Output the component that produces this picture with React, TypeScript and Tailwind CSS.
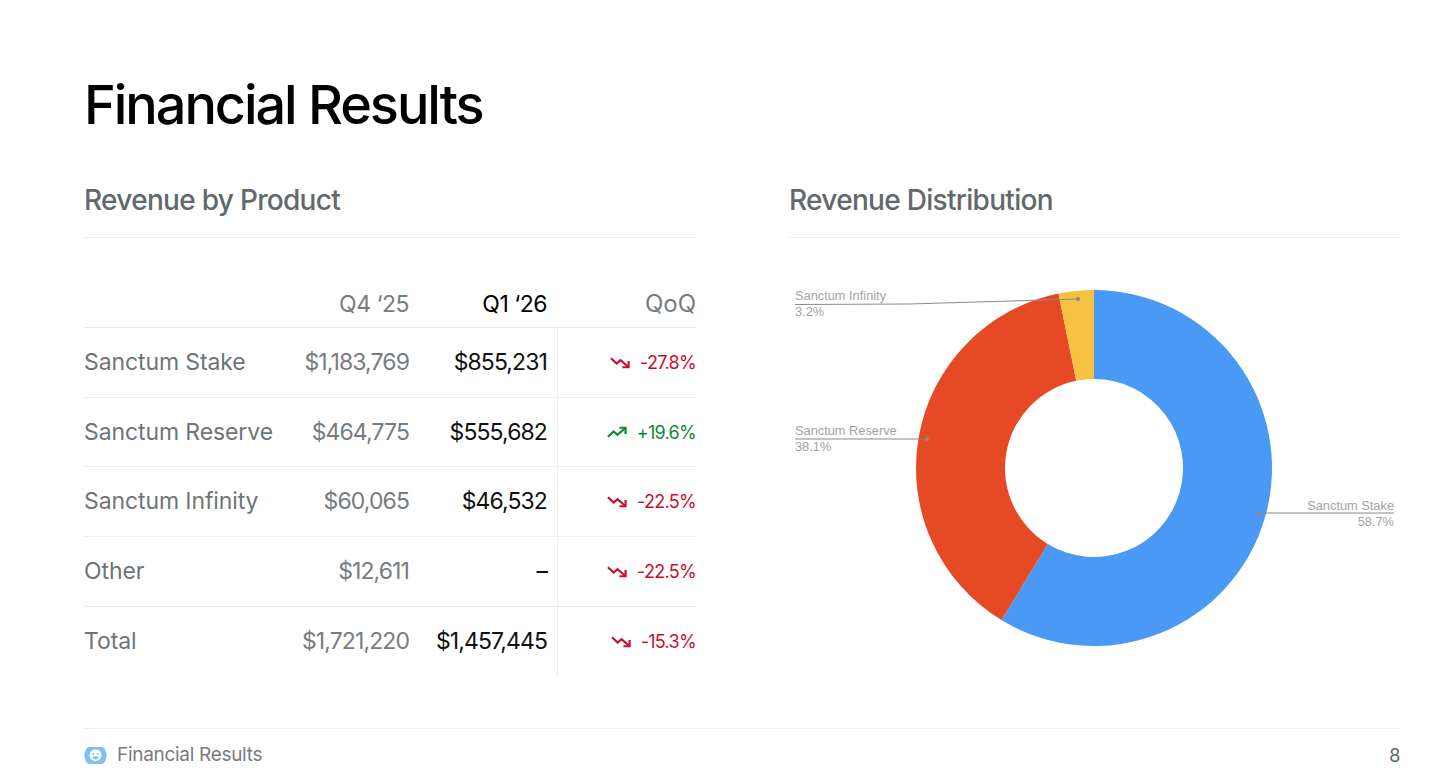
import React from 'react';

const font = { sans: 'font-["Inter",sans-serif]' };

const rows = [
  { name: 'Sanctum Stake', q4: '$1,183,769', q1: '$855,231', qoq: '-27.8%', up: false },
  { name: 'Sanctum Reserve', q4: '$464,775', q1: '$555,682', qoq: '+19.6%', up: true },
  { name: 'Sanctum Infinity', q4: '$60,065', q1: '$46,532', qoq: '-22.5%', up: false },
  { name: 'Other', q4: '$12,611', q1: '–', qoq: '-22.5%', up: false },
  { name: 'Total', q4: '$1,721,220', q1: '$1,457,445', qoq: '-15.3%', up: false },
];

const Trend = ({ up }: { up: boolean }) => (
  <svg width="20" height="13" viewBox="0 0 21 13" fill="none" stroke={up ? '#0f8a34' : '#c8102e'} strokeWidth="2.3">
    {up ? (
      <>
        <polyline points="1,11 7,5.500 11,9 19,2" />
        <polyline points="13,1.500 19.500,1.500 19.500,8" />
      </>
    ) : (
      <>
        <polyline points="1,2 7,7.500 11,4 19,11" />
        <polyline points="19.500,5 19.500,11.500 13,11.500" />
      </>
    )}
  </svg>
);

// center of the donut sits at 305,188 in the chart box
const polar = (pct: number, r: number) => {
  const a = (pct / 100) * 2 * Math.PI;
  return [305 + r * Math.sin(a), 188 - r * Math.cos(a)];
};

const slice = (from: number, to: number) => {
  const [x1, y1] = polar(from, 178);
  const [x2, y2] = polar(to, 178);
  const [x3, y3] = polar(to, 89);
  const [x4, y4] = polar(from, 89);
  const large = to - from > 50 ? 1 : 0;
  return `M${x1} ${y1} A178 178 0 ${large} 1 ${x2} ${y2} L${x3} ${y3} A89 89 0 ${large} 0 ${x4} ${y4} Z`;
};

const Donut = () => (
  <svg width="612" height="380" viewBox="0 0 612 380" className="mt-[42px]">
    <path d={slice(0, 58.7)} fill="#4a9af5" />
    <path d={slice(58.7, 96.8)} fill="#e64a25" />
    <path d={slice(96.8, 100)} fill="#f7c242" />
    <g fontFamily="Liberation Sans, sans-serif" fontSize="12.8" fill="#a3a3a3">
      <text x="6" y="20">Sanctum Infinity</text>
      <text x="6" y="36">3.2%</text>
      <text x="6" y="155">Sanctum Reserve</text>
      <text x="6" y="171">38.1%</text>
      <text x="605" y="230" textAnchor="end">Sanctum Stake</text>
      <text x="605" y="246" textAnchor="end">58.7%</text>
    </g>
    <g stroke="#8a8a8a" strokeWidth="1" fill="none">
      <polyline points="6,24.500 120,24 289,19" />
      <polyline points="6,159 138,159" />
      <polyline points="605,233 468,233" />
    </g>
    <g fill="#8a8a8a">
      <circle cx="289" cy="19" r="2" />
      <circle cx="138" cy="159" r="2" />
      <circle cx="468" cy="233" r="2" />
    </g>
  </svg>
);

const SectionTitle = ({ children }: { children: React.ReactNode }) => (
  <div className="h-[55px] border-b border-[#eceeef]">
    <h2 className="text-[28px] leading-[34px] font-medium tracking-[-0.7px] text-[#62686b]">{children}</h2>
  </div>
);

export default function App() {
  return (
    <div className={`w-[1445px] h-[783px] overflow-hidden bg-white pl-[84px] pr-[45px] pt-[71px] flex flex-col ${font.sans}`}>
      <h1 className="text-[54px] leading-[68px] font-medium tracking-[-2.05px] text-black">Financial Results</h1>

      <div className="mt-[44px] grid grid-cols-[612px_612px] gap-x-[93px] h-[545px]">
        <div>
          <SectionTitle>Revenue by Product</SectionTitle>
          <div className="mt-[47px] text-[23px] tracking-[-0.9px]">
            <div className="grid grid-cols-[325px_138px_149px] h-[43px] border-b border-[#e6e8e9] items-center text-right pb-1">
              <span className="text-[#777c80] tracking-[-0.5px]">Q4 ‘25</span>
              <span className="text-black tracking-[-0.5px]">Q1 ‘26</span>
              <span className="text-[#777c80] text-[24px] tracking-normal">QoQ</span>
            </div>
            {rows.map((r, i) => (
              <div
                key={r.name}
                className={`grid grid-cols-[325px_138px_149px] h-[69.7px] ${i === 3 ? 'border-b border-[#e2e4e5]' : i < 3 ? 'border-b border-[#eceeef]' : ''}`}
              >
                <div className="flex items-center justify-between">
                  <span className="text-[#6f7477] tracking-[-0.1px]">{r.name}</span>
                  <span className="text-[#777c80]">{r.q4}</span>
                </div>
                <div className="flex items-center justify-end text-[#111]">{r.q1}</div>
                <div className="ml-[10px] border-l border-[#eceeef] flex items-center justify-end gap-[10px] text-[18px] tracking-[-0.7px]">
                  <Trend up={r.up} />
                  <span className={r.up ? 'text-[#0f8a34]' : 'text-[#c8102e]'}>{r.qoq}</span>
                </div>
              </div>
            ))}
          </div>
        </div>
        <div>
          <SectionTitle>Revenue Distribution</SectionTitle>
          <Donut />
        </div>
      </div>

      <div className="h-[54px] border-t border-[#eceeef] flex items-center justify-between text-[19px] tracking-[-0.3px]">
        <div className="flex items-center gap-[10px] text-[#777c80]">
          <svg width="23" height="19" viewBox="0 0 23 19">
            <path d="M6 1h11c3 0 4 2 4.500 4 1.500 2 1.500 7 0 9-.5 2-2 4-4.500 4H6c-3 0-4-2-4.500-4-1.500-2-1.500-7 0-9C2 3 3 1 6 1z" fill="#7cc0f5" />
            <path d="M11.500 3.500c3.500 0 6 2.500 6 5.500s-2.500 6-6 6-6-3-6-6 2.500-5.500 6-5.500z" fill="#fff" />
            <circle cx="9.300" cy="8" r="1" fill="#7cc0f5" />
            <circle cx="13.700" cy="8" r="1" fill="#7cc0f5" />
            <path d="M8.500 10.500h6c0 2-1.500 3-3 3s-3-1-3-3z" fill="#7cc0f5" />
          </svg>
          <span>Financial Results</span>
        </div>
        <span className="text-[#62686b] text-[18px]">8</span>
      </div>
    </div>
  );
}
